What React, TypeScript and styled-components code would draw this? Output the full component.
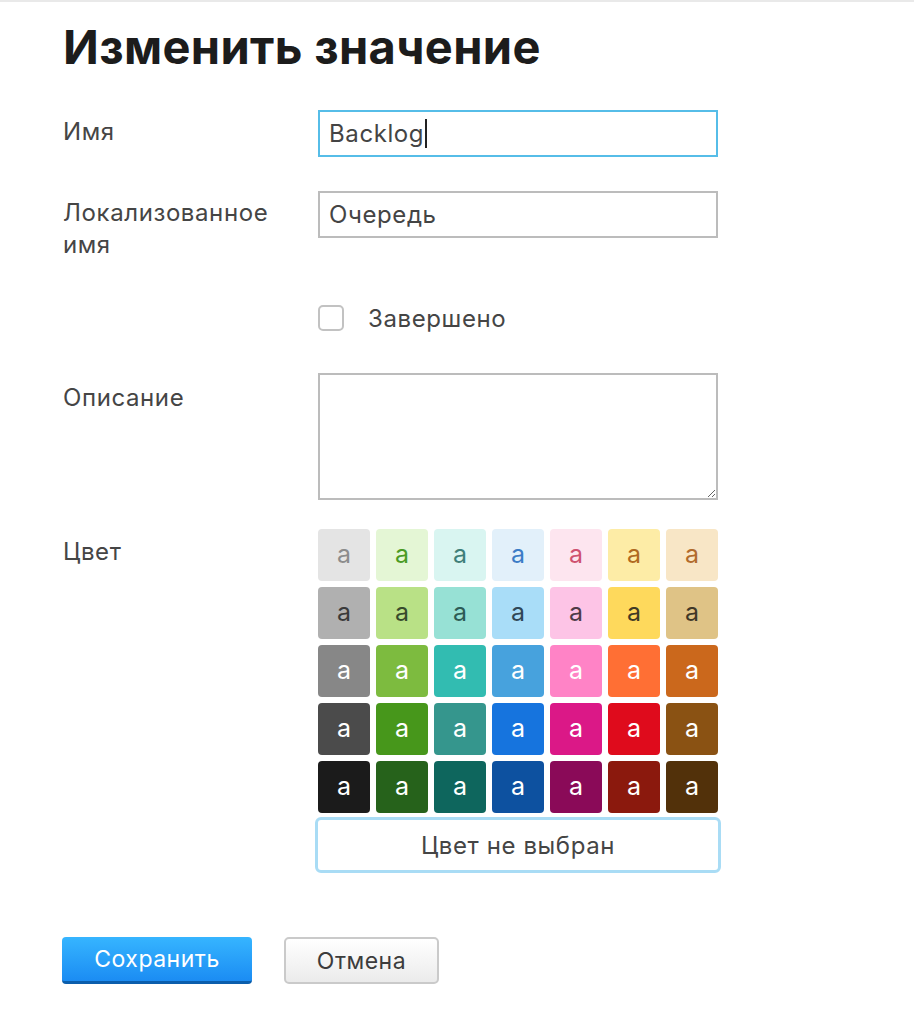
import React from 'react';
import styled, { createGlobalStyle } from 'styled-components';

const GlobalStyle = createGlobalStyle`
  html, body {
    margin: 0;
    padding: 0;
    background: #ffffff;
  }
  body {
    font-family: Inter, "Noto Sans", "Liberation Sans", sans-serif;
    color: #444444;
  }
`;

const Page = styled.div`
  border-top: 2px solid #e9e9e9;
  padding: 0 0 30px 63px;
  min-height: 1000px;
  box-sizing: border-box;
`;

const Title = styled.h1`
  margin: 17px 0 0 0;
  font-size: 47px;
  line-height: 56px;
  font-weight: 700;
  color: #1c1c1c;
  letter-spacing: 0.35px;
`;

const Row = styled.div<{ $mt: number }>`
  display: grid;
  grid-template-columns: 255px 400px;
  margin-top: ${(p) => p.$mt}px;
`;

const Label = styled.div<{ $pt?: number }>`
  max-width: 230px;
  padding-top: ${(p) => p.$pt ?? 6}px;
  font-size: 24px;
  line-height: 32px;
  letter-spacing: 0.6px;
  color: #454545;
`;

const TextBox = styled.div<{ $focused?: boolean }>`
  box-sizing: border-box;
  height: 47px;
  border: 2px solid ${(p) => (p.$focused ? '#56bde8' : '#bcbcbc')};
  padding: 0 9px;
  display: flex;
  align-items: center;
  font-size: 24px;
  letter-spacing: 0.6px;
  color: #444444;
`;

const Caret = styled.span`
  display: inline-block;
  width: 2px;
  height: 29px;
  margin-left: 1px;
  background: #222;
`;

const CheckRow = styled.label`
  display: flex;
  align-items: center;
  gap: 24px;
  font-size: 24px;
  letter-spacing: 0.6px;
  color: #454545;
  height: 26px;
`;

const CheckBox = styled.span`
  box-sizing: border-box;
  width: 26px;
  height: 26px;
  border: 2px solid #c2c2c2;
  border-radius: 5px;
  background: #fff;
`;

const TextArea = styled.textarea`
  box-sizing: border-box;
  display: block;
  width: 400px;
  height: 127px;
  margin: 0;
  border: 2px solid #bcbcbc;
  border-radius: 0;
  outline: none;
  font-family: inherit;
  font-size: 24px;
  padding: 8px 9px;
  resize: vertical;
`;

const Palette = styled.div`
  display: grid;
  grid-template-columns: repeat(7, 52px);
  grid-auto-rows: 52px;
  gap: 6px;
`;

const Swatch = styled.div<{ $bg: string; $fg: string }>`
  background: ${(p) => p.$bg};
  color: ${(p) => p.$fg};
  border-radius: 4px;
  display: flex;
  align-items: center;
  justify-content: center;
  font-size: 25px;
  padding-bottom: 2px;
  box-sizing: border-box;
`;

const NoColor = styled.div`
  box-sizing: border-box;
  width: 406px;
  height: 56px;
  margin: 4px 0 0 -3px;
  border: 3px solid #a9dcf5;
  border-radius: 6px;
  display: flex;
  align-items: center;
  justify-content: center;
  font-size: 24px;
  letter-spacing: 0.6px;
  color: #454545;
`;

const Actions = styled.div`
  display: flex;
  gap: 32px;
  margin: 64px 0 0 -1px;
`;

const Button = styled.button<{ $primary?: boolean }>`
  box-sizing: border-box;
  height: 47px;
  padding: 0;
  font-family: inherit;
  font-size: 23px;
  letter-spacing: 0.5px;
  cursor: pointer;
  ${(p) =>
    p.$primary
      ? `
    width: 190px;
    color: #ffffff;
    border: none;
    border-bottom: 3px solid #0b5eac;
    border-radius: 4px;
    background: linear-gradient(#36b5ff, #1b8cf3);
  `
      : `
    width: 155px;
    color: #3c3c3c;
    border: 2px solid #cacaca;
    border-radius: 5px;
    background: linear-gradient(#ffffff, #ebebeb);
  `}
`;

const palette: [string, string][][] = [
  [
    ['#e4e4e4', '#8c8c8c'],
    ['#e4f6d5', '#4a9b24'],
    ['#d9f5f1', '#3f7f79'],
    ['#e2f0fa', '#3c7cc6'],
    ['#fde5ef', '#cf516f'],
    ['#fdeca6', '#b0691f'],
    ['#f8e6c6', '#b26b2c'],
  ],
  [
    ['#b0b0b0', '#3a3a3a'],
    ['#b9e186', '#374a2c'],
    ['#97e1d5', '#2d5b55'],
    ['#a9ddf8', '#2f4656'],
    ['#fdc4e6', '#4e3b46'],
    ['#fed95c', '#413a25'],
    ['#dfc386', '#403727'],
  ],
  [
    ['#878787', '#ffffff'],
    ['#7dbb3f', '#ffffff'],
    ['#32bcb1', '#ffffff'],
    ['#47a2dd', '#ffffff'],
    ['#ff83c6', '#ffffff'],
    ['#ff6f34', '#ffffff'],
    ['#cb681c', '#ffffff'],
  ],
  [
    ['#4b4b4b', '#ffffff'],
    ['#47971b', '#ffffff'],
    ['#35968d', '#ffffff'],
    ['#1674de', '#ffffff'],
    ['#db1887', '#ffffff'],
    ['#df0b1c', '#ffffff'],
    ['#8a5213', '#ffffff'],
  ],
  [
    ['#1b1b1b', '#ffffff'],
    ['#26621b', '#ffffff'],
    ['#0e665d', '#ffffff'],
    ['#0d51a0', '#ffffff'],
    ['#8a0a58', '#ffffff'],
    ['#8b190d', '#ffffff'],
    ['#52310a', '#ffffff'],
  ],
];

export default function App() {
  return (
    <>
      <GlobalStyle />
      <Page>
        <Title>Изменить значение</Title>

        <Row $mt={35}>
          <Label>Имя</Label>
          <TextBox $focused>
            Backlog
            <Caret />
          </TextBox>
        </Row>

        <Row $mt={34}>
          <Label>Локализованное имя</Label>
          <TextBox>Очередь</TextBox>
        </Row>

        <Row $mt={44}>
          <div />
          <CheckRow>
            <CheckBox />
            Завершено
          </CheckRow>
        </Row>

        <Row $mt={42}>
          <Label $pt={9}>Описание</Label>
          <TextArea />
        </Row>

        <Row $mt={29}>
          <Label $pt={7}>Цвет</Label>
          <div>
            <Palette>
              {palette.flat().map(([bg, fg], i) => (
                <Swatch key={i} $bg={bg} $fg={fg}>
                  a
                </Swatch>
              ))}
            </Palette>
            <NoColor>Цвет не выбран</NoColor>
          </div>
        </Row>

        <Actions>
          <Button $primary>Сохранить</Button>
          <Button>Отмена</Button>
        </Actions>
      </Page>
    </>
  );
}
